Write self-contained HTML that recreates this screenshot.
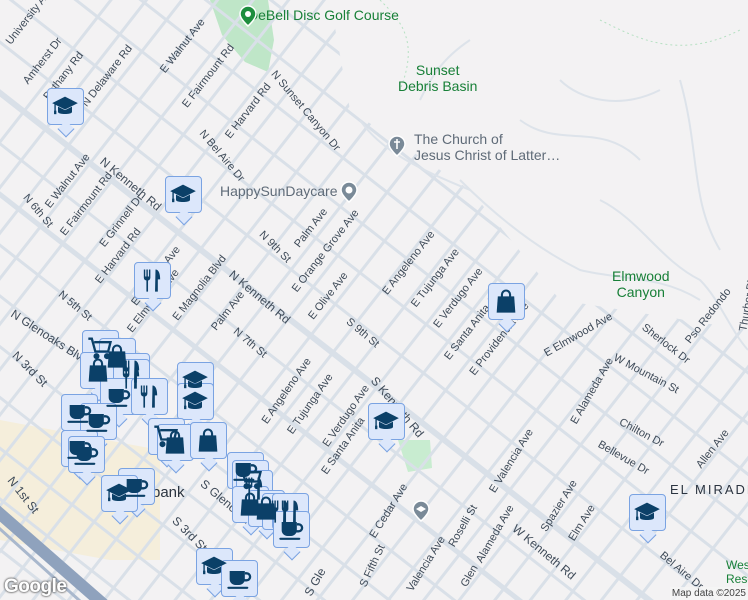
<!DOCTYPE html>
<html><head><meta charset="utf-8"><style>
html,body{margin:0;padding:0;width:748px;height:600px;overflow:hidden;background:#f3f2f3;font-family:"Liberation Sans",sans-serif}
#wrap{position:relative;width:748px;height:600px;overflow:hidden}
#map{position:absolute;left:0;top:0}
.l{position:absolute;font-size:11px;color:#3e4a58;white-space:nowrap;transform-origin:center center}
.mk{position:absolute;width:37px;height:37px;background:#dce7fb;border:1.5px solid #7aa3e2;border-radius:4px;box-sizing:border-box}
.mk:after{content:"";position:absolute;left:12px;top:34px;width:11px;height:11px;background:#dce7fb;border-right:1.5px solid #7aa3e2;border-bottom:1.5px solid #7aa3e2;transform:rotate(45deg)}
.mk svg{position:absolute;left:3px;top:3px;width:28px;height:28px;z-index:2}
.poi{position:absolute;font-size:14px;line-height:16px;white-space:nowrap}
</style></head><body><div id="wrap">
<svg id="map" width="748" height="600" viewBox="0 0 748 600">
<defs>
<clipPath id="grid"><polygon points="0,0 330,0 350,110 470,190 560,300 748,330 748,600 0,600"/></clipPath>
</defs>
<rect width="748" height="600" fill="#f3f2f3"/>
<polygon points="0,420 160,450 160,560 110,560 0,540" fill="#f5eedb"/>
<polygon points="210,0 268,0 274,40 268,72 245,62 222,35" fill="#bfe6c8"/>
<polygon points="398,440 430,440 432,468 408,472" fill="#c8ecd0"/>
<g clip-path="url(#grid)" stroke="#d9e0e8" fill="none">
<g transform="translate(265,300) rotate(38)" stroke-width="3">
<line x1="-900" y1="-480" x2="900" y2="-480"/><line x1="-900" y1="-440" x2="900" y2="-440"/>
<line x1="-900" y1="-400" x2="900" y2="-400"/><line x1="-900" y1="-360" x2="900" y2="-360"/>
<line x1="-900" y1="-320" x2="900" y2="-320"/><line x1="-900" y1="-280" x2="900" y2="-280"/>
<line x1="-900" y1="-240" x2="900" y2="-240"/><line x1="-900" y1="-200" x2="900" y2="-200"/>
<line x1="-900" y1="-160" x2="900" y2="-160"/><line x1="-900" y1="-120" x2="900" y2="-120"/>
<line x1="-900" y1="-80" x2="900" y2="-80"/><line x1="-900" y1="-40" x2="900" y2="-40"/>
<line x1="-900" y1="0" x2="900" y2="0" stroke-width="6"/><line x1="-900" y1="40" x2="900" y2="40"/>
<line x1="-900" y1="80" x2="900" y2="80" stroke-width="5"/><line x1="-900" y1="120" x2="900" y2="120"/>
<line x1="-900" y1="160" x2="900" y2="160"/><line x1="-900" y1="200" x2="900" y2="200"/>
<line x1="-900" y1="240" x2="900" y2="240"/><line x1="-900" y1="280" x2="900" y2="280"/>
<line x1="-900" y1="320" x2="900" y2="320"/><line x1="-900" y1="360" x2="900" y2="360"/>
</g>
<g transform="translate(374,300) rotate(-52)" stroke-width="3">
<line x1="-800" y1="-392" x2="800" y2="-392"/><line x1="-800" y1="-364" x2="800" y2="-364"/>
<line x1="-800" y1="-336" x2="800" y2="-336"/><line x1="-800" y1="-308" x2="800" y2="-308"/>
<line x1="-800" y1="-280" x2="800" y2="-280"/><line x1="-800" y1="-252" x2="800" y2="-252"/>
<line x1="-800" y1="-224" x2="800" y2="-224"/><line x1="-800" y1="-196" x2="800" y2="-196"/>
<line x1="-800" y1="-168" x2="800" y2="-168"/><line x1="-800" y1="-140" x2="800" y2="-140"/>
<line x1="-800" y1="-112" x2="800" y2="-112"/><line x1="-800" y1="-84" x2="800" y2="-84"/>
<line x1="-800" y1="-56" x2="800" y2="-56"/><line x1="-800" y1="-28" x2="800" y2="-28"/>
<line x1="-800" y1="0" x2="800" y2="0"/><line x1="-800" y1="28" x2="800" y2="28"/>
<line x1="-800" y1="56" x2="800" y2="56"/><line x1="-800" y1="84" x2="800" y2="84"/>
<line x1="-800" y1="112" x2="800" y2="112"/><line x1="-800" y1="140" x2="800" y2="140"/>
<line x1="-800" y1="168" x2="800" y2="168"/><line x1="-800" y1="196" x2="800" y2="196"/>
<line x1="-800" y1="224" x2="800" y2="224"/><line x1="-800" y1="252" x2="800" y2="252"/>
<line x1="-800" y1="280" x2="800" y2="280"/><line x1="-800" y1="308" x2="800" y2="308"/>
<line x1="-800" y1="336" x2="800" y2="336"/><line x1="-800" y1="364" x2="800" y2="364"/>
<line x1="-800" y1="392" x2="800" y2="392"/><line x1="-800" y1="420" x2="800" y2="420"/>
</g>
</g>
<g stroke="#dde3ea" fill="none" stroke-width="2">
<path d="M360 120 C 380 150 420 170 470 190"/>
<path d="M460 180 C 500 220 540 250 580 270 C 620 280 660 275 700 300"/>
<path d="M600 200 C 640 220 660 260 700 280 C 720 300 730 330 748 350"/>
<path d="M680 80 C 700 150 690 200 720 250"/>
<path d="M520 120 C 560 150 600 120 640 160"/>
<path d="M420 100 C 430 80 440 60 470 40"/>
<path d="M560 80 C 580 100 620 110 660 90"/>
</g>
<g stroke="#b5e0c2" fill="none" stroke-dasharray="2 3" stroke-width="1">
<path d="M380 0 C 400 20 420 40 400 90"/><path d="M600 20 C 640 40 680 60 740 30"/>
</g>
<path d="M-10 505 L110 610" stroke="#8fa2bd" stroke-width="12" fill="none"/>
<path d="M-10 520 L90 610" stroke="#a9b8cd" stroke-width="3" fill="none"/>
</svg>

<div class="poi" style="left:248px;top:7px;color:#188038">DeBell Disc Golf Course</div>
<svg style="position:absolute;left:238px;top:4px" width="20" height="24"><path d="M10 2a8 8 0 0 1 8 8c0 5-8 12-8 12S2 15 2 10a8 8 0 0 1 8-8z" fill="#1e8e3e" stroke="#fff" stroke-width="1.5"/><circle cx="10" cy="10" r="3" fill="#fff"/></svg>
<div class="poi" style="left:398px;top:62px;color:#188038;text-align:center">Sunset<br>Debris Basin</div>
<svg style="position:absolute;left:387px;top:134px" width="20" height="24"><path d="M10 2a8 8 0 0 1 8 8c0 5-8 12-8 12S2 15 2 10a8 8 0 0 1 8-8z" fill="#7a8a98" stroke="#fff" stroke-width="1.5"/><path d="M10 5v10M7 8h6" stroke="#fff" stroke-width="1.6"/></svg>
<div class="poi" style="left:414px;top:131px;color:#5f6b78">The Church of<br>Jesus Christ of Latter…</div>
<div class="poi" style="left:220px;top:183px;color:#5f6b78">HappySunDaycare</div>
<svg style="position:absolute;left:339px;top:180px" width="20" height="24"><path d="M10 2a8 8 0 0 1 8 8c0 5-8 12-8 12S2 15 2 10a8 8 0 0 1 8-8z" fill="#7a8a98" stroke="#fff" stroke-width="1.5"/><circle cx="10" cy="10" r="3.5" fill="#fff"/></svg>
<svg style="position:absolute;left:411px;top:499px" width="20" height="24"><path d="M10 2a8 8 0 0 1 8 8c0 5-8 12-8 12S2 15 2 10a8 8 0 0 1 8-8z" fill="#7a8a98" stroke="#fff" stroke-width="1.5"/><path d="M5 10l5-3 5 3-5 3z" fill="#fff"/></svg>
<div class="poi" style="left:612px;top:268px;color:#188038;text-align:center">Elmwood<br>Canyon</div>
<div class="poi" style="left:670px;top:482px;color:#2b3440;font-size:13px;letter-spacing:2px">EL MIRADE</div>
<div class="poi" style="left:726px;top:558px;color:#188038;font-size:12px;line-height:14px">Wes<br>Rese</div>
<div class="poi" style="left:152px;top:485px;color:#2b3440;font-size:15px">bank</div>

<div class="l" style="left:-5px;top:10px;transform:rotate(-52deg)">University Ave</div>
<div class="l" style="left:15px;top:55px;transform:rotate(-52deg)">Amherst Dr</div>
<div class="l" style="left:35px;top:70px;transform:rotate(-52deg)">Bethany Rd</div>
<div class="l" style="left:70px;top:70px;transform:rotate(-52deg)">N Delaware Rd</div>
<div class="l" style="left:150px;top:40px;transform:rotate(-52deg)">E Walnut Ave</div>
<div class="l" style="left:170px;top:70px;transform:rotate(-52deg)">E Fairmount Rd</div>
<div class="l" style="left:215px;top:105px;transform:rotate(-52deg)">E Harvard Rd</div>
<div class="l" style="left:255px;top:105px;transform:rotate(50deg)">N Sunset Canyon Dr</div>
<div class="l" style="left:190px;top:150px;transform:rotate(50deg)">N Bel Aire Dr</div>
<div class="l" style="left:93px;top:177px;transform:rotate(40deg);font-size:12px">N Kenneth Rd</div>
<div class="l" style="left:35px;top:175px;transform:rotate(-52deg)">E Walnut Ave</div>
<div class="l" style="left:48px;top:198px;transform:rotate(-52deg)">E Fairmount Rd</div>
<div class="l" style="left:90px;top:215px;transform:rotate(-52deg)">E Grinnell Dr</div>
<div class="l" style="left:18px;top:205px;transform:rotate(50deg)">N 6th St</div>
<div class="l" style="left:85px;top:250px;transform:rotate(-52deg)">E Harvard Rd</div>
<div class="l" style="left:288px;top:222px;transform:rotate(-52deg)">Palm Ave</div>
<div class="l" style="left:255px;top:241px;transform:rotate(45deg)">N 9th St</div>
<div class="l" style="left:275px;top:245px;transform:rotate(-52deg)">E Orange Grove Ave</div>
<div class="l" style="left:222px;top:290px;transform:rotate(40deg);font-size:12px">N Kenneth Rd</div>
<div class="l" style="left:160px;top:282px;transform:rotate(-52deg)">E Magnolia Blvd</div>
<div class="l" style="left:120px;top:270px;transform:rotate(-52deg)">E Cypress Ave</div>
<div class="l" style="left:115px;top:295px;transform:rotate(-52deg)">E Elmwood Ave</div>
<div class="l" style="left:55px;top:300px;transform:rotate(40deg)">N 5th St</div>
<div class="l" style="left:5px;top:330px;transform:rotate(33deg);font-size:12px">N Glenoaks Blvd</div>
<div class="l" style="left:8px;top:362px;transform:rotate(45deg);font-size:12px">N 3rd St</div>
<div class="l" style="left:205px;top:305px;transform:rotate(-52deg)">Palm Ave</div>
<div class="l" style="left:230px;top:337px;transform:rotate(40deg)">N 7th St</div>
<div class="l" style="left:300px;top:290px;transform:rotate(-52deg)">E Olive Ave</div>
<div class="l" style="left:370px;top:257px;transform:rotate(-52deg)">E Angeleno Ave</div>
<div class="l" style="left:400px;top:272px;transform:rotate(-52deg)">E Tujunga Ave</div>
<div class="l" style="left:422px;top:292px;transform:rotate(-52deg)">E Verdugo Ave</div>
<div class="l" style="left:343px;top:327px;transform:rotate(40deg)">S 9th St</div>
<div class="l" style="left:430px;top:318px;transform:rotate(-52deg)">E Santa Anita Ave</div>
<div class="l" style="left:455px;top:333px;transform:rotate(-52deg)">E Providencia Ave</div>
<div class="l" style="left:540px;top:329px;transform:rotate(-30deg)">E Elmwood Ave</div>
<div class="l" style="left:637px;top:338px;transform:rotate(38deg)">Sherlock Dr</div>
<div class="l" style="left:675px;top:310px;transform:rotate(-52deg)">Pso Redondo</div>
<div class="l" style="left:610px;top:368px;transform:rotate(28deg)">W Mountain St</div>
<div class="l" style="left:555px;top:385px;transform:rotate(-60deg)">E Alameda Ave</div>
<div class="l" style="left:617px;top:427px;transform:rotate(28deg)">Chilton Dr</div>
<div class="l" style="left:595px;top:452px;transform:rotate(30deg)">Bellevue Dr</div>
<div class="l" style="left:690px;top:443px;transform:rotate(-52deg)">Allen Ave</div>
<div class="l" style="left:475px;top:455px;transform:rotate(-58deg)">E Valencia Ave</div>
<div class="l" style="left:530px;top:500px;transform:rotate(-58deg)">Spazier Ave</div>
<div class="l" style="left:562px;top:517px;transform:rotate(-58deg)">Elm Ave</div>
<div class="l" style="left:440px;top:520px;transform:rotate(-60deg)">Roselli St</div>
<div class="l" style="left:463px;top:528px;transform:rotate(-60deg)">Alameda Ave</div>
<div class="l" style="left:505px;top:545px;transform:rotate(40deg);font-size:12px">W Kenneth Rd</div>
<div class="l" style="left:358px;top:505px;transform:rotate(-58deg)">E Cedar Ave</div>
<div class="l" style="left:395px;top:558px;transform:rotate(-58deg)">Valencia Ave</div>
<div class="l" style="left:350px;top:560px;transform:rotate(-65deg)">S Fifth St</div>
<div class="l" style="left:655px;top:565px;transform:rotate(40deg)">Bel Aire Dr</div>
<div class="l" style="left:722px;top:300px;transform:rotate(-80deg)">Thurber Pl</div>
<div class="l" style="left:248px;top:385px;transform:rotate(-55deg)">E Angeleno Ave</div>
<div class="l" style="left:275px;top:398px;transform:rotate(-55deg)">E Tujunga Ave</div>
<div class="l" style="left:310px;top:410px;transform:rotate(-55deg)">E Verdugo Ave</div>
<div class="l" style="left:310px;top:440px;transform:rotate(-55deg)">E Santa Anita</div>
<div class="l" style="left:360px;top:400px;transform:rotate(50deg);font-size:12px">S Kenneth Rd</div>
<div class="l" style="left:195px;top:495px;transform:rotate(40deg);font-size:12px">S Glenoaks</div>
<div class="l" style="left:168px;top:527px;transform:rotate(45deg);font-size:12px">S 3rd St</div>
<div class="l" style="left:2px;top:488px;transform:rotate(52deg);font-size:12px">N 1st St</div>
<div class="l" style="left:458px;top:570px;transform:rotate(-60deg)">Glen</div>
<div class="l" style="left:300px;top:575px;transform:rotate(-60deg);font-size:12px">S Gle</div>

<svg width="0" height="0" style="position:absolute">
<defs>
<g id="cap" fill="#0b4068"><path d="M12 4L1 9.5 12 15 23 9.5z"/><path d="M6 12.5v4.5c0 2.5 12 2.5 12 0v-4.5l-6 3z"/><path d="M3.5 10.5v6" stroke="#0b4068" stroke-width="1.2"/><rect x="2.6" y="16" width="2" height="3"/></g>
<g id="cup" fill="#0b4068"><path d="M4 6h13v7a5 5 0 0 1-5 5H9a5 5 0 0 1-5-5z"/><path d="M17 8h1.5a3 3 0 0 1 0 6H16" fill="none" stroke="#0b4068" stroke-width="2"/><rect x="2" y="19.5" width="18" height="1.8" rx=".9"/></g>
<g id="fork" fill="#0b4068"><path d="M5 3h1.2v6h1V3h1.2v6h1V3h1.2v7a2.5 2.5 0 0 1-2 2.4V22H7.2v-9.6A2.5 2.5 0 0 1 5 10z"/><path d="M15 3c2.5 0 4 3 4 8.5h-2V22h-2.4z"/></g>
<g id="bag" fill="#0b4068"><path d="M5 8h14l1 14H4z"/><path d="M8.5 9V6.5a3.5 3.5 0 0 1 7 0V9" fill="none" stroke="#0b4068" stroke-width="1.8"/></g>
<g id="cart" fill="none" stroke="#0b4068" stroke-width="2"><path d="M2 4h3l3 11h11l2-8H7"/><circle cx="9" cy="19" r="1.6" fill="#0b4068"/><circle cx="18" cy="19" r="1.6" fill="#0b4068"/></g>
</defs></svg>

<div class="mk" style="left:47px;top:88px"><svg viewBox="0 0 24 24"><use href="#cap"/></svg></div>
<div class="mk" style="left:165px;top:176px"><svg viewBox="0 0 24 24"><use href="#cap"/></svg></div>
<div class="mk" style="left:134px;top:262px"><svg viewBox="0 0 24 24"><use href="#fork"/></svg></div>
<div class="mk" style="left:488px;top:283px"><svg viewBox="0 0 24 24"><use href="#bag"/></svg></div>
<div class="mk" style="left:368px;top:403px"><svg viewBox="0 0 24 24"><use href="#cap"/></svg></div>
<div class="mk" style="left:629px;top:494px"><svg viewBox="0 0 24 24"><use href="#cap"/></svg></div>

<div class="mk" style="left:82px;top:330px"><svg viewBox="0 0 24 24"><use href="#cart"/></svg></div>
<div class="mk" style="left:99px;top:338px"><svg viewBox="0 0 24 24"><use href="#bag"/></svg></div>
<div class="mk" style="left:80px;top:352px"><svg viewBox="0 0 24 24"><use href="#bag"/></svg></div>
<div class="mk" style="left:113px;top:353px"><svg viewBox="0 0 24 24"><use href="#fork"/></svg></div>
<div class="mk" style="left:113px;top:359px"><svg viewBox="0 0 24 24"><use href="#fork"/></svg></div>
<div class="mk" style="left:100px;top:378px"><svg viewBox="0 0 24 24"><use href="#cup"/></svg></div>
<div class="mk" style="left:131px;top:378px"><svg viewBox="0 0 24 24"><use href="#fork"/></svg></div>
<div class="mk" style="left:177px;top:362px"><svg viewBox="0 0 24 24"><use href="#cap"/></svg></div>
<div class="mk" style="left:177px;top:383px"><svg viewBox="0 0 24 24"><use href="#cap"/></svg></div>
<div class="mk" style="left:61px;top:394px"><svg viewBox="0 0 24 24"><use href="#cup"/></svg></div>
<div class="mk" style="left:80px;top:403px"><svg viewBox="0 0 24 24"><use href="#cup"/></svg></div>
<div class="mk" style="left:61px;top:430px"><svg viewBox="0 0 24 24"><use href="#cup"/></svg></div>
<div class="mk" style="left:68px;top:436px"><svg viewBox="0 0 24 24"><use href="#cup"/></svg></div>
<div class="mk" style="left:148px;top:418px"><svg viewBox="0 0 24 24"><use href="#cart"/></svg></div>
<div class="mk" style="left:157px;top:424px"><svg viewBox="0 0 24 24"><use href="#bag"/></svg></div>
<div class="mk" style="left:190px;top:422px"><svg viewBox="0 0 24 24"><use href="#bag"/></svg></div>
<div class="mk" style="left:118px;top:468px"><svg viewBox="0 0 24 24"><use href="#cup"/></svg></div>
<div class="mk" style="left:101px;top:475px"><svg viewBox="0 0 24 24"><use href="#cap"/></svg></div>
<div class="mk" style="left:227px;top:452px"><svg viewBox="0 0 24 24"><use href="#cup"/></svg></div>
<div class="mk" style="left:232px;top:460px"><svg viewBox="0 0 24 24"><use href="#cart"/></svg></div>
<div class="mk" style="left:236px;top:470px"><svg viewBox="0 0 24 24"><use href="#fork"/></svg></div>
<div class="mk" style="left:232px;top:486px"><svg viewBox="0 0 24 24"><use href="#bag"/></svg></div>
<div class="mk" style="left:248px;top:490px"><svg viewBox="0 0 24 24"><use href="#bag"/></svg></div>
<div class="mk" style="left:262px;top:493px"><svg viewBox="0 0 24 24"><use href="#fork"/></svg></div>
<div class="mk" style="left:272px;top:493px"><svg viewBox="0 0 24 24"><use href="#fork"/></svg></div>
<div class="mk" style="left:273px;top:511px"><svg viewBox="0 0 24 24"><use href="#cup"/></svg></div>
<div class="mk" style="left:196px;top:548px"><svg viewBox="0 0 24 24"><use href="#cap"/></svg></div>
<div class="mk" style="left:221px;top:560px"><svg viewBox="0 0 24 24"><use href="#cup"/></svg></div>

<div style="position:absolute;left:4px;top:576px;font-size:19px;color:#fff;font-weight:bold;text-shadow:0 0 2px #555,0 0 2px #555;letter-spacing:-0.5px">Google</div>
<div style="position:absolute;right:0;top:587px;font-size:10px;color:#444;background:rgba(245,245,245,.8);padding:0 2px;line-height:13px">Map data ©2025</div>
</div></body></html>
